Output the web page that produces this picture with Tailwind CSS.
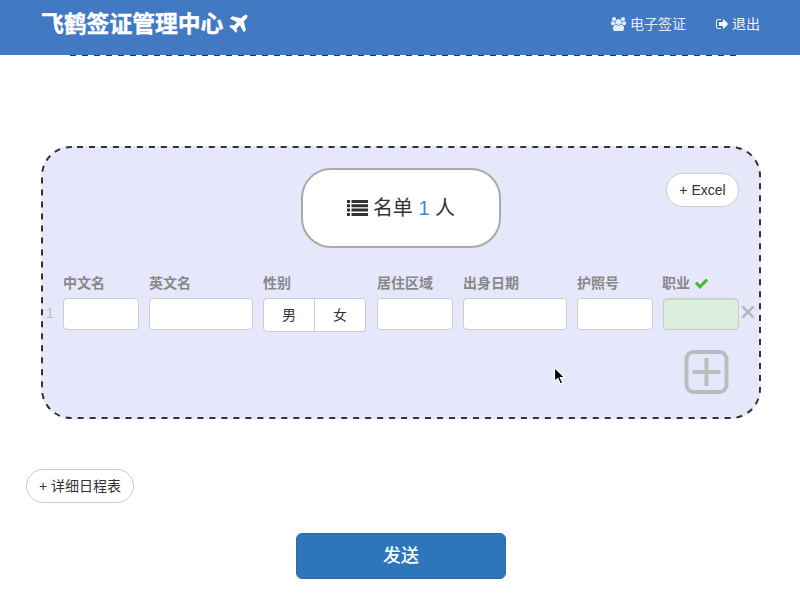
<!DOCTYPE html>
<html lang="zh-CN">
<head>
<meta charset="utf-8">
<title>飞鹤签证管理中心</title>
<script src="https://cdn.jsdelivr.net/npm/@tailwindcss/browser@4"></script>
</head>
<body class="h-[594px] overflow-hidden bg-white font-['Liberation_Sans','Noto_Sans_CJK_SC',sans-serif] text-sm text-[#333]">
<header class="relative z-10 flex h-[55px] items-start justify-between bg-[#4179c2] pr-10 pl-[41px] text-white">
  <h1 class="flex h-12 items-center whitespace-nowrap text-[22.8px] font-bold leading-none [-webkit-text-stroke:0.4px_white]">飞鹤签证管理中心
    <svg class="ml-1 h-[23px] w-[23px]" viewBox="0 0 1792 1792" fill="currentColor"><path d="M1568 160q44 52 12 148t-108 172l-161 161 160 696q5 19-12 33l-128 96q-7 6-19 6-4 0-7-1-15-3-21-16l-279-508-259 259 53 194q5 17-8 31l-96 96q-9 9-23 9h-2q-15-2-24-13l-189-252-252-189q-11-7-13-23-1-13 9-25l96-97q9-9 23-9 6 0 8 1l194 53 259-259-508-279q-14-8-17-24-2-16 9-27l128-128q14-13 30-8l665 159 160-160q76-76 172-108t148 12z"/></svg>
  </h1>
  <nav class="flex h-12 items-center gap-[30px] text-white/85">
    <a class="flex items-center gap-[4px] whitespace-nowrap"><svg class="h-[14px] w-[15px]" viewBox="-64 0 1920 1792" fill="currentColor"><path d="M529 896q-162 5-265 128h-134q-82 0-138-40.500t-56-118.500q0-353 124-353 6 0 43.500 21t97.500 42.500 119 21.500q67 0 133-23-5 37-5 66 0 139 81 256zm1071 637q0 120-73 189.500t-194 69.500h-874q-121 0-194-69.500t-73-189.500q0-53 3.500-103.500t14-109 26.500-108.500 43-97.500 62-81 85.500-53.500 111.500-20q10 0 43 21.500t73 48 107 48 135 21.500 135-21.500 107-48 73-48 43-21.500q61 0 111.500 20t85.500 53.500 62 81 43 97.500 26.500 108.500 14 109 3.500 103.500zm-1024-1277q0 106-75 181t-181 75-181-75-75-181 75-181 181-75 181 75 75 181zm704 384q0 159-112.500 271.500t-271.500 112.500-271.500-112.500-112.500-271.500 112.500-271.500 271.500-112.500 271.500 112.500 112.500 271.500zm576 225q0 78-56 118.500t-138 40.500h-134q-103-123-265-128 81-117 81-256 0-29-5-66 66 23 133 23 59 0 119-21.500t97.500-42.500 43.500-21q124 0 124 353zm-128-609q0 106-75 181t-181 75-181-75-75-181 75-181 181-75 181 75 75 181z"/></svg>电子签证</a>
    <a class="flex items-center gap-[3px] whitespace-nowrap text-white/95"><svg class="h-[14px] w-[13px]" viewBox="64 0 1664 1792" fill="currentColor"><path d="M704 1440q0 4 1 20t.5 26.500-3 23.500-10 19.500-20.500 6.500h-320q-119 0-203.500-84.500t-84.500-203.500v-704q0-119 84.500-203.500t203.500-84.500h320q13 0 22.500 9.500t9.500 22.500q0 4 1 20t.5 26.500-3 23.500-10 19.500-20.500 6.500h-320q-66 0-113 47t-47 113v704q0 66 47 113t113 47h312l11.500 1 11.500 3 8 5.500 7 9 2 13.500zm928-544q0 26-19 45l-544 544q-19 19-45 19t-45-19-19-45v-288h-448q-26 0-45-19t-19-45v-384q0-26 19-45t45-19h448v-288q0-26 19-45t45-19 45 19l544 544q19 19 19 45z"/></svg>退出</a>
  </nav>
</header>

<!-- lower edge of the section scrolled under the header -->
<svg class="block h-px w-[800px]" viewBox="0 0 800 1"><path d="M70 0.500H737" stroke="#23364f" stroke-width="1" stroke-dasharray="6 6"/></svg>

<section class="relative mt-[90px] ml-[41px] h-[273px] w-[720px] rounded-[30px] border-2 border-transparent bg-[#e7e7fb]">
  <!-- dashed outline -->
  <svg class="pointer-events-none absolute -top-0.5 -left-0.5 h-[273px] w-[720px]" viewBox="0 0 720 273" fill="none"><path d="M36 1H690A29 29 0 0 1 719 30V243A29 29 0 0 1 690 272H30A29 29 0 0 1 1 243V30A29 29 0 0 1 30 1Z" stroke="#333" stroke-width="2" stroke-dasharray="5.990 5.990"/></svg>
  <div class="grid grid-cols-[1fr_200px_1fr] items-start pt-5 pr-5">
    <span></span>
    <div class="ml-[10px] flex h-20 w-[200px] items-center justify-center gap-[5px] rounded-[30px] border-2 border-[#aaa] bg-white pb-px text-[20px] leading-none">
      <svg class="h-[18px] w-[21px]" viewBox="0 0 21 18" fill="#333"><path d="M0 1h3v3H0zM4.500 1H21v3H4.500zM0 5.300h3v3H0zM4.500 5.300H21v3H4.500zM0 9.600h3v3H0zM4.500 9.600H21v3H4.500zM0 13.900h3v3H0zM4.500 13.900H21v3H4.500z"/></svg>
      <span class="whitespace-nowrap">名单 <span class="text-[#4285e0]">1</span> 人</span>
    </div>
    <button class="mt-[5px] h-[34px] w-[73px] justify-self-end rounded-full border border-[#ccc] bg-white">+ Excel</button>
  </div>

  <div class="mt-[25px] flex">
    <span class="mt-[30px] w-5 pl-[3px] text-[#bbb]">1</span>
    <div class="grid grid-cols-[76px_104px_103px_76px_104px_76px_76px] gap-x-[10px] gap-y-[5px] [&>b]:h-5 [&>b]:whitespace-nowrap [&>b]:leading-5 [&>b]:text-[#888]">
      <b>中文名</b><b>英文名</b><b>性别</b><b class="pl-px">居住区域</b><b class="pl-px">出身日期</b><b class="pl-px">护照号</b>
      <b class="flex items-center gap-1">职业 <svg class="h-[15px] w-[15px]" viewBox="0 0 1792 1792" fill="#4fb53c"><path d="M1671 566q0 40-28 68l-724 724-136 136q-28 28-68 28t-68-28l-136-136-362-362q-28-28-28-68t28-68l136-136q28-28 68-28t68 28l294 295 656-657q28-28 68-28t68 28l136 136q28 28 28 68z"/></svg></b>
      <span class="h-8 rounded border border-[#ccc] bg-white"></span>
      <span class="h-8 rounded border border-[#ccc] bg-white"></span>
      <span class="flex h-[34px] rounded border border-[#ccc] bg-white text-center leading-8"><span class="w-[51px] border-r border-[#ccc]">男</span><span class="flex-1">女</span></span>
      <span class="ml-px -mr-px h-8 rounded border border-[#ccc] bg-white"></span>
      <span class="ml-px -mr-px h-8 rounded border border-[#ccc] bg-white"></span>
      <span class="ml-px -mr-px h-8 rounded border border-[#ccc] bg-white"></span>
      <span class="ml-px -mr-px h-8 rounded border border-[#c6cbc6] bg-[#dbefdc] shadow-[inset_0_1px_1px_rgba(0,0,0,0.08)]"></span>
    </div>
    <svg class="mt-8 ml-[3px] h-[14px] w-[14px] shrink-0" viewBox="0 0 14 14" stroke="#b9b9bd" stroke-width="2.500"><path d="M1.500 1.500l11 11M12.500 1.500l-11 11"/></svg>
  </div>
  <div class="mt-[18px] flex justify-end pr-[30px]">
    <svg class="h-11 w-[45px]" viewBox="0 0 45 44" fill="none" stroke="#bdbdbf" stroke-width="4"><rect x="2.500" y="2" width="40" height="40" rx="7"/><path d="M8.500 22h28M22.500 8v28"/></svg>
  </div>
</section>

<div class="pt-[50px] pl-[26px]"><button class="block h-[34px] w-[108px] whitespace-nowrap rounded-full border border-[#ccc] bg-white">+ 详细日程表</button></div>
<div class="mt-[30px] flex justify-center pl-[2px]"><button class="h-[46px] w-[210px] rounded-md border border-[#2e6da4] bg-[#2d76bb] text-[18px] font-medium leading-none text-white">发送</button></div>

<svg class="absolute top-[366px] left-[553px] h-[20px] w-[13px]" viewBox="0 0 13 20"><path d="M1.500 1.500v14l3.300-3.100 2.500 5.700 2.500-1.100-2.500-5.500h4.400z" fill="#000" stroke="#fff" stroke-width="1.200"/></svg>
</body>
</html>
